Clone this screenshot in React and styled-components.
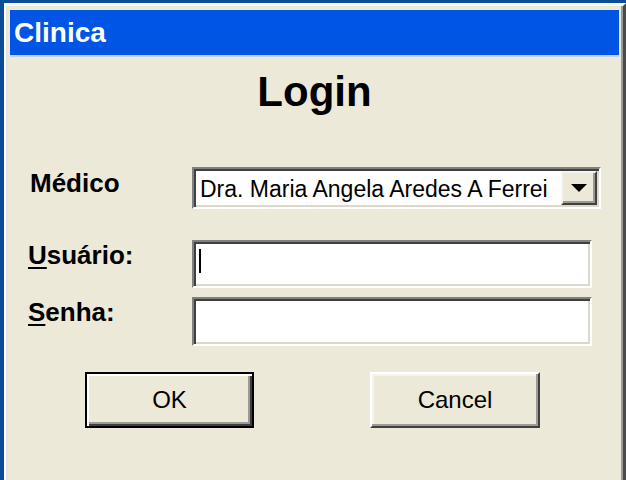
import React from "react";
import styled, { createGlobalStyle } from "styled-components";

const Global = createGlobalStyle`
  html, body { margin: 0; padding: 0; background: #0c4d9a; }
  * { box-sizing: border-box; }
`;

const Frame = styled.div`
  width: 626px;
  height: 480px;
  background: #0c4d9a;
  padding: 3px 0 0 4px;
  overflow: hidden;
`;

const Window = styled.div`
  height: 100%;
  display: flex;
  flex-direction: column;
  background: #ece9d8;
  border-top: 3px solid #f7f8fb;
  border-left: 2px solid #ffffff;
  border-right: 3px solid #4a4a4a;
  padding: 4px 4px 0 4px;
  box-shadow: inset -2px 0 0 #9c9a94, inset 2px 0 0 #e4e4e4;
`;

const TitleBar = styled.div`
  height: 45px;
  background: #0055e5;
  box-shadow: 0 2px 0 #bcd0f2;
  padding-left: 4px;
  display: flex;
  align-items: center;
  color: #ffffff;
  font-family: "Liberation Sans", Arial, sans-serif;
  font-weight: bold;
  font-size: 28px;
  line-height: 45px;
`;

const Content = styled.div`
  flex: 1;
  display: flex;
  flex-direction: column;
  padding-left: 18px;
  font-family: "Liberation Sans", Arial, sans-serif;
  color: #000;
`;

const Heading = styled.h1`
  margin: 16px 0 0 -18px;
  text-align: center;
  font-family: "Liberation Sans", Arial, sans-serif;
  font-weight: bold;
  font-size: 42px;
  line-height: 42px;
`;

const Form = styled.div`
  display: flex;
  flex-direction: column;
  margin-top: 54px;
`;

const Row = styled.div`
  display: flex;
  align-items: flex-start;
  margin-top: ${(p) => p.$gap || 0}px;
  height: ${(p) => p.$h}px;
`;

const Label = styled.label`
  width: 164px;
  padding-top: ${(p) => p.$top || 2}px;
  padding-left: ${(p) => p.$left || 0}px;
  font-weight: bold;
  font-size: 26px;
  line-height: 26px;
  u { text-decoration: underline; text-underline-offset: 3px; text-decoration-thickness: 2px; }
`;

const sunken = `
  background: #ffffff;
  border: 2px solid;
  border-color: #808080 #ffffff #ffffff #808080;
  box-shadow: inset 2px 2px 0 #404040, inset -2px -2px 0 #dcd9cc;
`;

const Combo = styled.div`
  ${sunken}
  width: 409px;
  height: 42px;
  display: flex;
  align-items: stretch;
  padding: 2px;
`;

const ComboText = styled.div`
  flex: 1;
  overflow: hidden;
  white-space: nowrap;
  padding: 3px 0 0 4px;
  display: flex;
  align-items: center;
  font-size: 23px;
`;

const DropButton = styled.div`
  width: 36px;
  background: #ece9d8;
  border: 2px solid;
  border-color: #f4f3ee #404040 #404040 #f4f3ee;
  box-shadow: inset -2px -2px 0 #9c9a94;
  display: flex;
  align-items: center;
  justify-content: center;
`;

const TextField = styled.div`
  ${sunken}
  width: 400px;
  height: ${(p) => p.$h}px;
  display: flex;
  align-items: center;
  padding-left: 5px;
`;

const Caret = styled.span`
  width: 2px;
  height: 24px;
  background: #000;
  margin-top: -6px;
`;

const Buttons = styled.div`
  display: flex;
  gap: 116px;
  margin-top: 26px;
  padding-left: 57px;
`;

const Button = styled.div`
  width: ${(p) => p.$w}px;
  height: 56px;
  display: flex;
  align-items: center;
  justify-content: center;
  font-size: 24px;
  background: #ece9d8;
  border: 2px solid;
  border-color: ${(p) => (p.$default ? "#000" : "#ffffff #404040 #404040 #ffffff")};
  box-shadow: ${(p) =>
    p.$default
      ? "inset 2px 2px 0 #ffffff, inset -2px -2px 0 #404040, inset -4px -4px 0 #9c9a94"
      : "inset -2px -2px 0 #9c9a94, inset 2px 2px 0 #f4f3ee"};
`;

export default function App() {
  return (
    <>
      <Global />
      <Frame>
        <Window>
          <TitleBar>Clinica</TitleBar>
          <Content>
            <Heading>Login</Heading>
            <Form>
              <Row $h={42}>
                <Label $top={3} $left={2}>Médico</Label>
                <Combo>
                  <ComboText>Dra. Maria Angela Aredes A Ferrei</ComboText>
                  <DropButton>
                    <svg width="16" height="8" viewBox="0 0 16 8">
                      <polygon points="0,0 16,0 8,8" fill="#000" />
                    </svg>
                  </DropButton>
                </Combo>
              </Row>
              <Row $h={48} $gap={31}>
                <Label><u>U</u>suário:</Label>
                <TextField $h={48}>
                  <Caret />
                </TextField>
              </Row>
              <Row $h={49} $gap={9}>
                <Label><u>S</u>enha:</Label>
                <TextField $h={49} />
              </Row>
            </Form>
            <Buttons>
              <Button $w={169} $default>OK</Button>
              <Button $w={170}>Cancel</Button>
            </Buttons>
          </Content>
        </Window>
      </Frame>
    </>
  );
}
